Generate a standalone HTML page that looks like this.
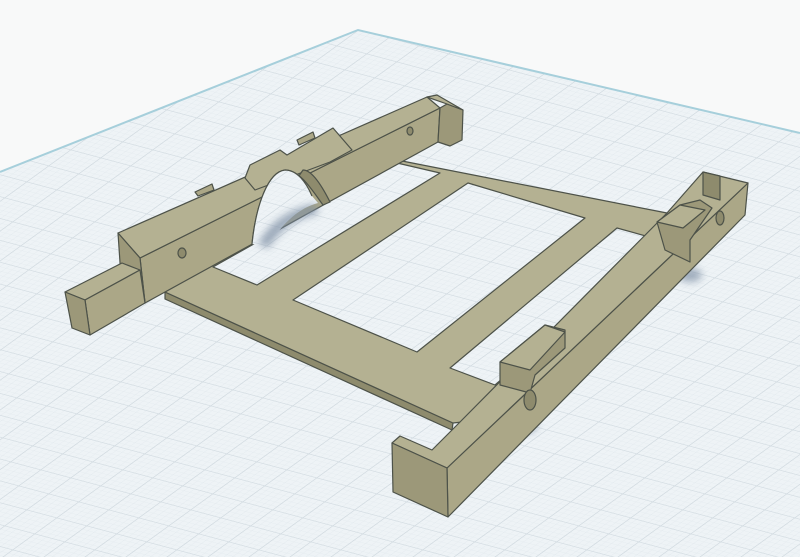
<!DOCTYPE html>
<html><head><meta charset="utf-8"><style>html,body{margin:0;padding:0;background:#f8f9f9}svg{display:block}</style></head>
<body>
<svg width="800" height="557" viewBox="0 0 800 557" xmlns="http://www.w3.org/2000/svg">
<defs>
<pattern id="g" patternUnits="userSpaceOnUse" width="10" height="10" patternTransform="matrix(2.2 -1.6 3.0 0.8 358 30)">
<rect width="10" height="10" fill="#eef3f6"/>
<g fill="#e0e7ec">
<rect x="2" y="0" width="0.12" height="10"/><rect x="4" y="0" width="0.12" height="10"/><rect x="6" y="0" width="0.12" height="10"/><rect x="8" y="0" width="0.12" height="10"/>
<rect y="2" x="0" height="0.12" width="10"/><rect y="4" x="0" height="0.12" width="10"/><rect y="6" x="0" height="0.12" width="10"/><rect y="8" x="0" height="0.12" width="10"/>
</g>
<rect x="0" y="0" width="0.3" height="10" fill="#d2dbe1"/>
<rect x="0" y="0" width="10" height="0.3" fill="#d2dbe1"/>
</pattern>
<filter id="b" x="-50%" y="-50%" width="200%" height="200%"><feGaussianBlur stdDeviation="4"/></filter>
</defs>
<rect width="800" height="557" fill="#f8f9f9"/>
<polygon points="0,172 358,30 800,133 800,557 0,557" fill="url(#g)"/>
<polyline points="0,172 358,30 800,133" fill="none" stroke="#a6cfdb" stroke-width="2"/>

<ellipse cx="525" cy="425" rx="12" ry="8" fill="#7f90a5" opacity="0.7" filter="url(#b)"/>
<ellipse cx="690" cy="275" rx="12" ry="7" fill="#7f90a5" opacity="0.7" filter="url(#b)"/>

<g stroke="#4d5249" stroke-width="1.2" stroke-linejoin="round">
<polygon points="165,292 453,423 452,430 165,299" fill="#8e8b6d"/>
<polygon points="165,292 397,160 667,213 700,225 480,420 453,423" fill="#b4b192"/>
<polygon points="397,163 440,173 257,285 213,267" fill="url(#g)"/>
<polygon points="468,183 585,218 417,352 293,300" fill="url(#g)"/>
<polygon points="617,228 660,240 495,385 450,368" fill="url(#g)"/>

<!-- left rail -->
<polygon points="140,258 440,108 438,142 145,303" fill="#aba787"/>
<polygon points="118,233 427,97 440,108 140,258" fill="#b4b192"/>
<polygon points="118,233 140,258 145,303 122,292" fill="#9c9879"/>
<polygon points="245,178 250,165 280,150 287,155 333,128 352,150 330,162 255,190" fill="#b4b192"/>
<polygon points="195,192 212,184 214,190 198,196" fill="#aba787"/>
<polygon points="297,140 313,132 315,138 299,145" fill="#aba787"/>
<path d="M252,244 C256,205 268,172 285,170 C300,170 312,190 323,205 L330,202 C322,186 312,170 303,170 Z" fill="#8e8b6d"/>
<path d="M252,244 C256,205 268,172 285,170 C297,170 306,182 312,196 L318,203 C300,208 285,220 268,246 Z" fill="url(#g)" stroke="none"/>
<path d="M258,244 C270,222 290,208 316,204 L318,214 C296,218 282,228 268,248 Z" fill="#7f90a5" opacity="0.75" stroke="none" filter="url(#b)"/>
<path d="M252,244 C256,205 268,172 285,170 C297,170 306,182 312,196" fill="none"/>
<polygon points="440,108 447,104 463,110 462,140 450,146 438,142" fill="#9c9879"/>
<polygon points="427,97 437,95 463,110 447,104" fill="#b4b192"/>
<polygon points="65,292 122,263 140,270 85,300" fill="#b4b192"/>
<polygon points="85,300 140,270 145,303 90,335" fill="#aba787"/>
<polygon points="65,292 85,300 90,335 72,328" fill="#9c9879"/>
<ellipse cx="182" cy="253" rx="4" ry="5" fill="#8e8b6d"/>
<ellipse cx="410" cy="131" rx="3" ry="4" fill="#8e8b6d"/>

<!-- right rail -->
<polygon points="447,468 748,183 745,215 448,517" fill="#aba787"/>
<polygon points="392,443 400,436 432,450 460,422 667,213 703,172 748,183 447,468" fill="#b4b192"/>
<polygon points="392,443 447,468 448,517 393,492" fill="#9c9879"/>
<polygon points="500,362 545,325 565,330 565,348 535,375 530,393 500,385" fill="#9c9879"/>
<polygon points="500,362 545,325 565,332 530,370" fill="#b4b192"/>
<polygon points="657,222 680,205 700,200 712,208 690,240 690,262 665,250" fill="#9c9879"/>
<polygon points="657,222 680,205 705,210 683,228" fill="#b4b192"/>
<polygon points="703,172 720,176 720,200 703,195" fill="#8e8b6d"/>
<ellipse cx="530" cy="400" rx="6" ry="10" fill="#8e8b6d"/>
<ellipse cx="720" cy="218" rx="4" ry="7" fill="#8e8b6d"/>
</g>
</svg>
</body></html>
